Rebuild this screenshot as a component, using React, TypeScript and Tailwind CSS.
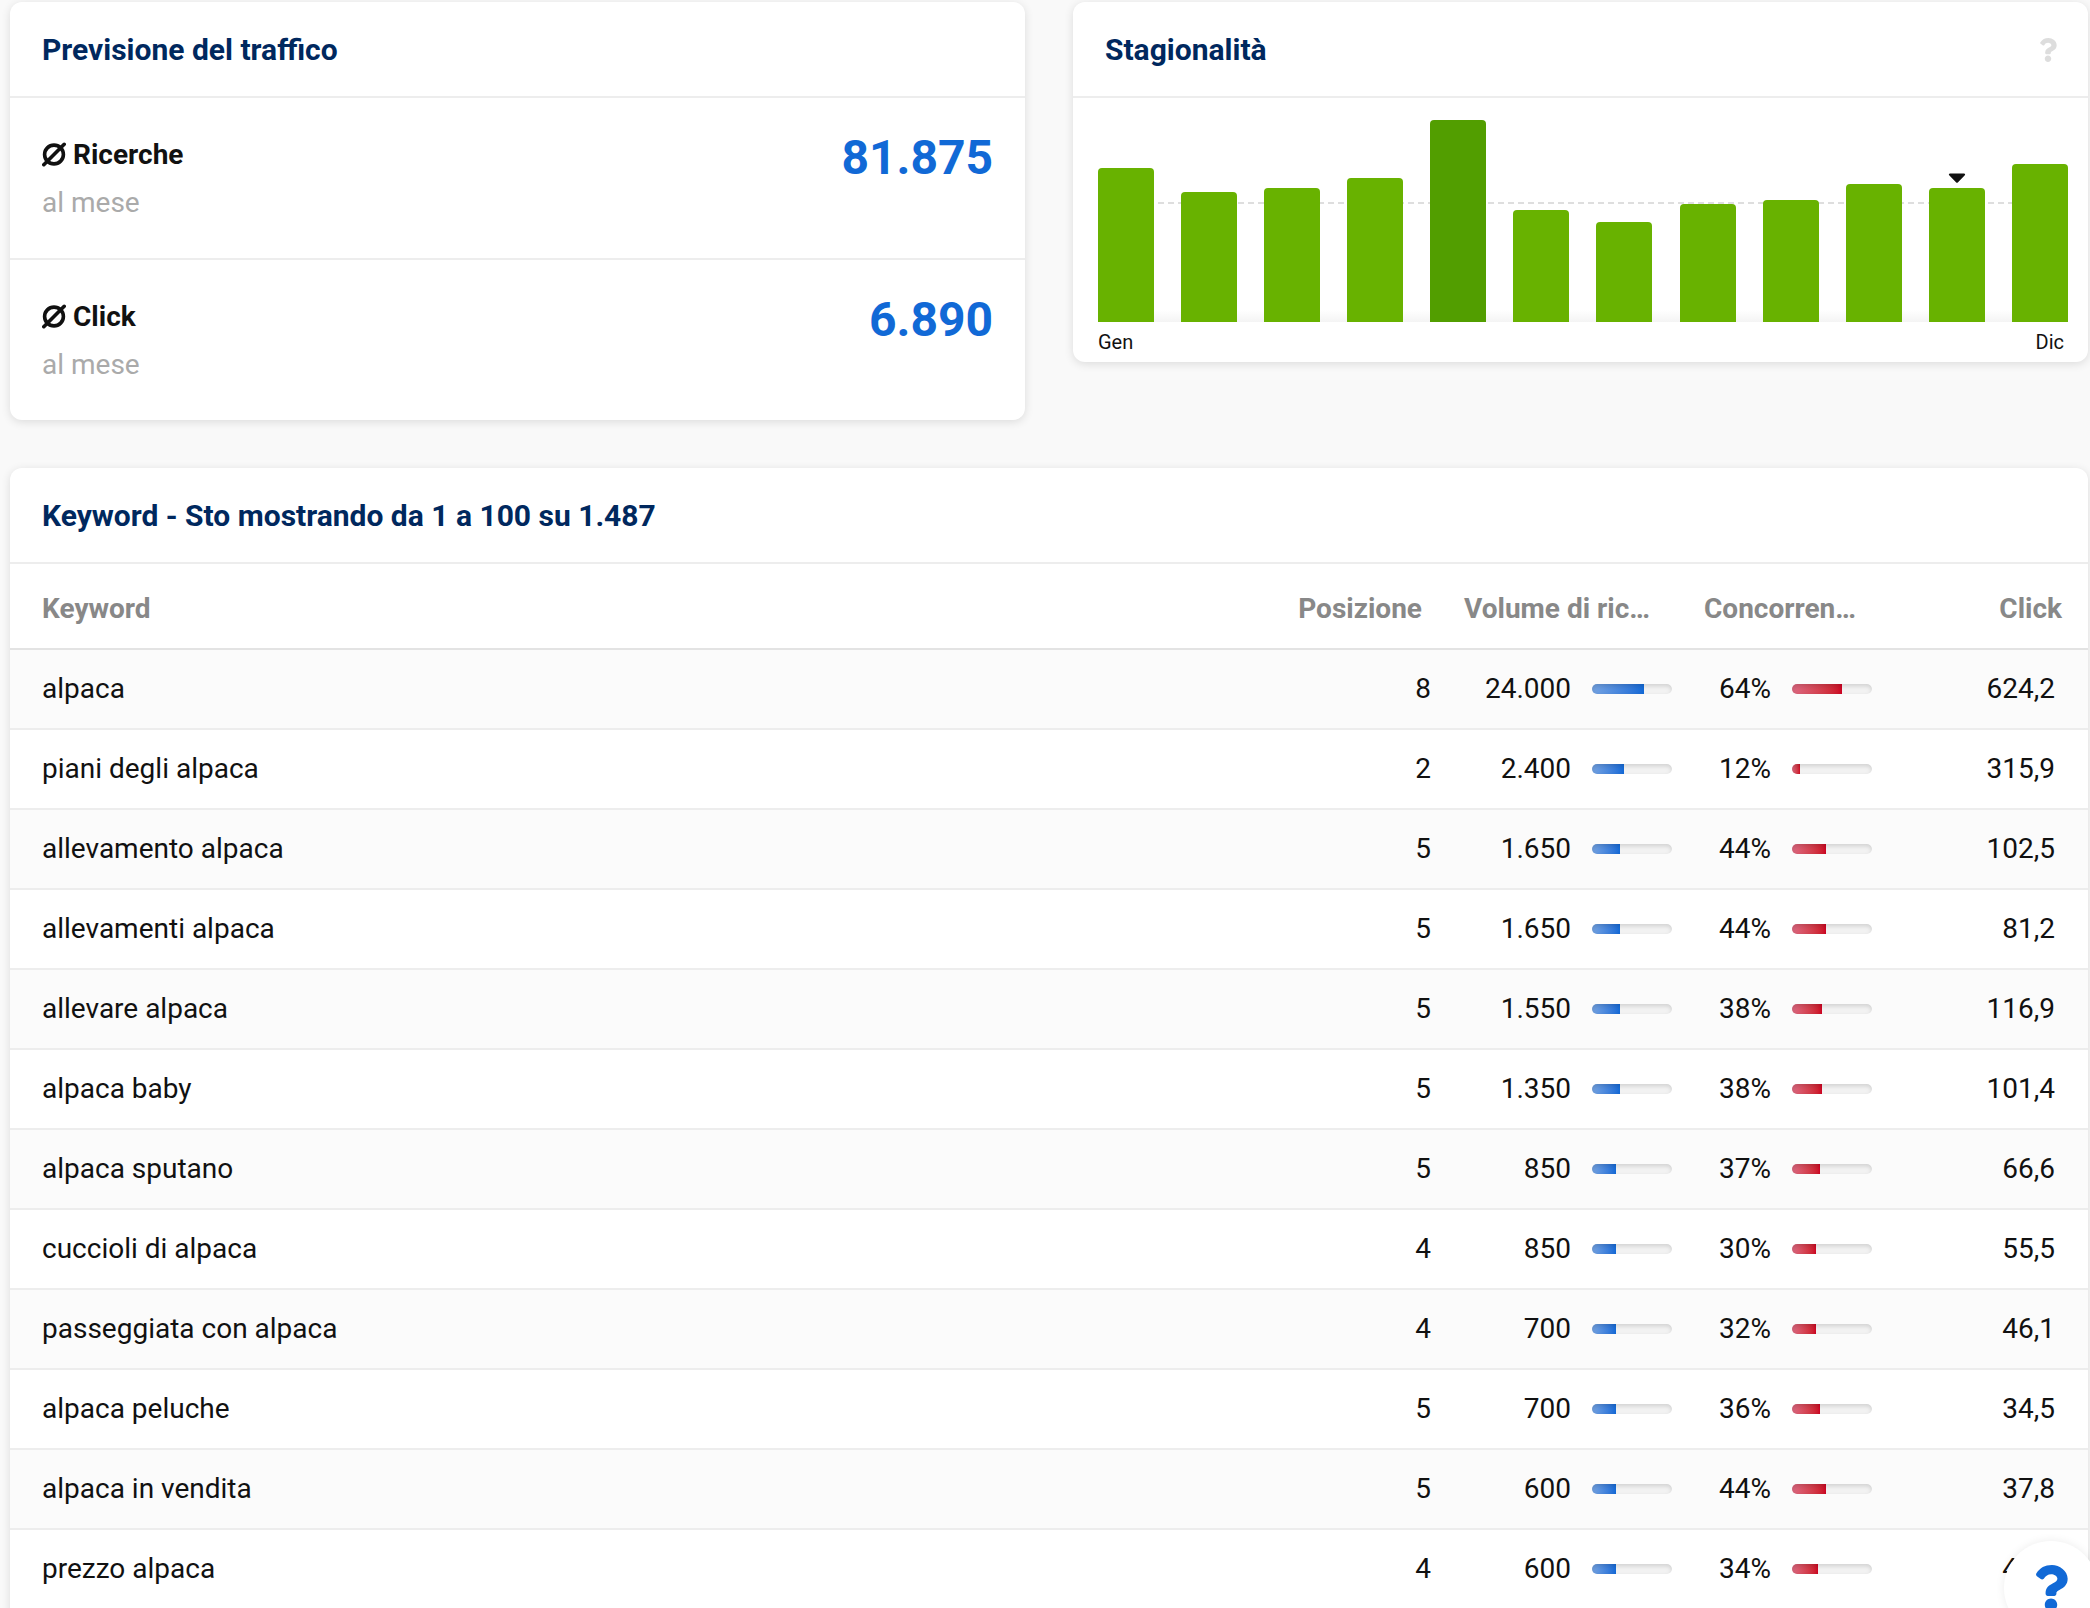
import type { ReactNode } from "react";
import { FaCaretDown, FaQuestion } from "react-icons/fa";

const months = [
  { name: "Gennaio", searches: 154 },
  { name: "Febbraio", searches: 130 },
  { name: "Marzo", searches: 134 },
  { name: "Aprile", searches: 144 },
  { name: "Maggio", searches: 202, peak: true },
  { name: "Giugno", searches: 112 },
  { name: "Luglio", searches: 100 },
  { name: "Agosto", searches: 118 },
  { name: "Settembre", searches: 122 },
  { name: "Ottobre", searches: 138 },
  { name: "Novembre", searches: 134, current: true },
  { name: "Dicembre", searches: 158 },
];

const maxSearches = Math.max(...months.map((month) => month.searches));

const traffic = [
  { label: "Ricerche", value: "81.875" },
  { label: "Click", value: "6.890" },
];

const keywords = [
  { keyword: "alpaca", position: 8, volume: "24.000", level: 65, competition: 64, clicks: "624,2" },
  { keyword: "piani degli alpaca", position: 2, volume: "2.400", level: 40, competition: 12, clicks: "315,9" },
  { keyword: "allevamento alpaca", position: 5, volume: "1.650", level: 35, competition: 44, clicks: "102,5" },
  { keyword: "allevamenti alpaca", position: 5, volume: "1.650", level: 35, competition: 44, clicks: "81,2" },
  { keyword: "allevare alpaca", position: 5, volume: "1.550", level: 35, competition: 38, clicks: "116,9" },
  { keyword: "alpaca baby", position: 5, volume: "1.350", level: 35, competition: 38, clicks: "101,4" },
  { keyword: "alpaca sputano", position: 5, volume: "850", level: 30, competition: 37, clicks: "66,6" },
  { keyword: "cuccioli di alpaca", position: 4, volume: "850", level: 30, competition: 30, clicks: "55,5" },
  { keyword: "passeggiata con alpaca", position: 4, volume: "700", level: 30, competition: 32, clicks: "46,1" },
  { keyword: "alpaca peluche", position: 5, volume: "700", level: 30, competition: 36, clicks: "34,5" },
  { keyword: "alpaca in vendita", position: 5, volume: "600", level: 30, competition: 44, clicks: "37,8" },
  { keyword: "prezzo alpaca", position: 4, volume: "600", level: 30, competition: 34, clicks: "43,7" },
];

function Card({ title, action, children }: { title: string; action?: ReactNode; children: ReactNode }) {
  return (
    <section className="shrink-0 overflow-hidden rounded-xl bg-white shadow-[0_2px_10px_rgba(0,0,0,0.12)]">
      <header className="flex h-24 items-center justify-between border-b-2 border-[#ededed] pt-[2px] pr-7 pl-8">
        <h2 className="text-[30px] leading-9 font-bold text-[#00285e]">{title}</h2>
        {action}
      </header>
      {children}
    </section>
  );
}

function AverageIcon() {
  return (
    <svg viewBox="0 0 26 26" className="h-[26px] w-[26px]" fill="none" stroke="currentColor" strokeWidth="3.6" strokeLinecap="round" aria-hidden="true">
      <circle cx="12" cy="12.5" r="9.4" />
      <path d="M1.8 22.7 22.2 2.3" />
    </svg>
  );
}

function Meter({ value, color }: { value: number; color: "blue" | "red" }) {
  return (
    <div className="relative h-[10px] w-20 shrink-0 overflow-hidden rounded-full bg-[#f2f2f2]">
      <div
        className={`h-full ${
          color === "blue"
            ? "bg-linear-to-r from-[#74a3e2] to-[#1169d6]"
            : "bg-linear-to-r from-[#dc6880] to-[#cc0022]"
        }`}
        style={{ width: Math.floor(value * 0.4) * 2 }}
      />
      <div className="absolute inset-0 rounded-full shadow-[inset_0_2px_4px_rgba(0,0,0,0.14)]" />
    </div>
  );
}

function Seasonality() {
  return (
    <div className="pt-[22px] pr-5 pl-[25px]">
      <div className="relative flex h-[202px] items-end justify-between bg-linear-to-t from-[#f4f4f4] to-white to-[6%]">
        {/* yearly average */}
        <div className="absolute top-[82px] right-14 left-[60px] h-[2px] bg-[repeating-linear-gradient(to_right,#dedede_0_6px,transparent_6px_10px)]" />
        {months.map((month) => (
          <div
            key={month.name}
            title={month.name}
            className={`relative w-14 rounded-t ${month.peak ? "bg-[#529e00]" : "bg-[#68b200]"}`}
            style={{ height: `${(month.searches / maxSearches) * 100}%` }}
          >
            {month.current && (
              <FaCaretDown className="absolute bottom-full left-1/2 -mb-[3px] h-7 w-7 -translate-x-1/2 text-[#111]" />
            )}
          </div>
        ))}
      </div>
      <div className="flex h-10 items-center justify-between pr-1 text-xl text-[#111]">
        <span>Gen</span>
        <span>Dic</span>
      </div>
    </div>
  );
}

function KeywordTable() {
  return (
    <table className="mb-6 w-full table-fixed border-collapse text-[28px] leading-9 text-[#111]">
      <colgroup>
        <col />
        <col className="w-[160px]" />
        <col className="w-[240px]" />
        <col className="w-[200px]" />
        <col className="w-[210px]" />
      </colgroup>
      <thead>
        <tr className="h-[85px] border-b-2 border-[#e3e3e3] whitespace-nowrap text-[#888]">
          <th scope="col" className="pt-[6px] pl-8 text-left font-bold">Keyword</th>
          <th scope="col" className="pt-[6px] pr-4 text-right font-bold">Posizione</th>
          <th scope="col" title="Volume di ricerca" className="pt-[6px] pl-[26px] text-left font-bold">Volume di ric…</th>
          <th scope="col" title="Concorrenza" className="pt-[6px] pl-[26px] text-left font-bold">Concorren…</th>
          <th scope="col" className="pt-[6px] pr-[26px] text-right font-bold">Click</th>
        </tr>
      </thead>
      <tbody>
        {keywords.map((row) => (
          <tr key={row.keyword} className="h-20 border-b-2 border-[#ededed] odd:bg-[#fbfbfb]">
            <td className="pl-8">{row.keyword}</td>
            <td className="pr-[7px] text-right">{row.position}</td>
            <td>
              <div className="flex items-center justify-end gap-[21px] pr-[6px]">
                {row.volume}
                <Meter value={row.level} color="blue" />
              </div>
            </td>
            <td>
              <div className="flex items-center justify-end gap-[21px] pr-[6px]">
                {row.competition}%
                <Meter value={row.competition} color="red" />
              </div>
            </td>
            <td className="pr-[33px] text-right">{row.clicks}</td>
          </tr>
        ))}
      </tbody>
    </table>
  );
}

export default function App() {
  return (
    <main className="flex h-screen flex-col gap-12 overflow-hidden bg-[#f9f9f9] pt-[2px] pr-[2px] pl-[10px] font-[Roboto,sans-serif]">
      <div className="grid shrink-0 grid-cols-2 items-start gap-12">
        <Card title="Previsione del traffico">
          <dl className="divide-y-2 divide-[#ededed]">
            {traffic.map((item) => (
              <div key={item.label} className="flex items-start justify-between px-8 pt-[33px] pb-[31px]">
                <dt className="text-[28px] text-[#111]">
                  <div className="flex items-center gap-[5px] leading-[48px] font-bold">
                    <AverageIcon />
                    {item.label}
                  </div>
                  <div className="leading-[48px] text-[#aaa]">al mese</div>
                </dt>
                <dd className="text-[48px] leading-[54px] font-bold text-[#1169d6]">{item.value}</dd>
              </div>
            ))}
          </dl>
        </Card>

        <Card
          title="Stagionalità"
          action={
            <button type="button" aria-label="Informazioni sulla stagionalità" className="text-2xl text-[#ddd]">
              <FaQuestion />
            </button>
          }
        >
          <Seasonality />
        </Card>
      </div>

      <Card title="Keyword - Sto mostrando da 1 a 100 su 1.487">
        <KeywordTable />
      </Card>

      <button
        type="button"
        aria-label="Aiuto"
        className="fixed -right-2 -bottom-[27px] flex h-[94px] w-[94px] items-center justify-center rounded-full bg-white text-[46px] text-[#1169d6] shadow-[0_0_10px_rgba(0,0,0,0.08)]"
      >
        <FaQuestion />
      </button>
    </main>
  );
}
